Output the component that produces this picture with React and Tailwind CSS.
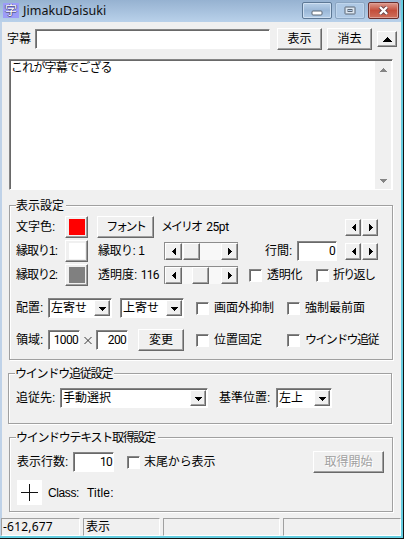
import { clsx } from "clsx";

const raised =
  "border border-t-white border-l-white border-r-[#696969] border-b-[#696969] shadow-[inset_-1px_-1px_0_#a0a0a0] bg-[#f0f0f0]";
const sunken =
  "border border-t-[#858585] border-l-[#858585] border-r-white border-b-white shadow-[inset_1px_1px_0_#696969] bg-white";

function Text({ className, children }) {
  return (
    <span className={clsx("block shrink-0 whitespace-pre", className)}>{children}</span>
  );
}

function Row({ className, children }) {
  return <div className={clsx("flex shrink-0 items-center", className)}>{children}</div>;
}

function Arrow({ dir, className }) {
  const shapes = {
    left: "M5 0h1v7H5zM4 1h1v5H4zM3 2h1v3H3zM2 3h1v1H2z",
    right: "M2 0h1v7H2zM3 1h1v5H3zM4 2h1v3H4zM5 3h1v1H5z",
    up: "M3 2h1v1H3zM2 3h3v1H2zM1 4h5v1H1zM0 5h7v1H0z",
    down: "M0 2h7v1H0zM1 3h5v1H1zM2 4h3v1H2zM3 5h1v1H3z",
  };
  return (
    <svg
      viewBox="0 0 7 7"
      shapeRendering="crispEdges"
      className={clsx("h-[7px] w-[7px] shrink-0 fill-current", className)}
    >
      <path d={shapes[dir]} />
    </svg>
  );
}

function Button({ className, children }) {
  return (
    <button
      className={clsx("flex shrink-0 items-center justify-center whitespace-nowrap", raised, className)}
    >
      {children}
    </button>
  );
}

function Swatch({ color }) {
  return (
    <Button className="ml-px h-[22px] w-[23px]">
      <span className={clsx("h-4 w-4", color)} />
    </Button>
  );
}

function Check({ className }) {
  return <span className={clsx("h-[13px] w-[13px] shrink-0", sunken, className)} />;
}

function Field({ className, children }) {
  return (
    <div className={clsx("flex h-5 shrink-0 items-center justify-end pr-px", sunken, className)}>
      <span className="font-[Roboto] text-[12px] tracking-[-0.7px]">{children}</span>
    </div>
  );
}

function Select({ className, children }) {
  return (
    <div className={clsx("flex h-5 shrink-0 items-center justify-between p-px pl-[2px]", sunken, className)}>
      <span className="whitespace-nowrap">{children}</span>
      <Button className="h-4 w-4">
        <Arrow dir="down" />
      </Button>
    </div>
  );
}

function Spin({ className }) {
  return (
    <div className={clsx("flex shrink-0 gap-px", className)}>
      <Button className="h-[17px] w-4">
        <Arrow dir="left" />
      </Button>
      <Button className="h-[17px] w-4">
        <Arrow dir="right" />
      </Button>
    </div>
  );
}

function Slider({ thumb }) {
  return (
    <div className="flex h-[18px] w-[74px] shrink-0 border-t border-l border-[#8c8c8c] bg-[#f8f8f8]">
      <Button className="h-[17px] w-[17px]">
        <Arrow dir="left" />
      </Button>
      <Button className={clsx("h-[17px] w-[17px]", thumb)} />
      <Button className="ml-auto h-[17px] w-[17px]">
        <Arrow dir="right" />
      </Button>
    </div>
  );
}

function Group({ title, legend, className, children }) {
  return (
    <section
      className={clsx(
        "flex w-96 shrink-0 flex-col border border-[#a0a0a0] pl-[6px] shadow-[1px_1px_0_#fff,inset_1px_1px_0_#fff]",
        className
      )}
    >
      <h2 className={clsx("-mt-[7px] h-[14px] shrink-0 bg-[#f0f0f0] leading-[14px] whitespace-nowrap", legend)}>
        {title}
      </h2>
      {children}
    </section>
  );
}

function TitleBar() {
  return (
    <header className="flex h-[22px] shrink-0 items-start bg-linear-to-b from-[#96b2d1] to-[#b9d1ea] pl-[3px]">
      <span className="mt-[3px] flex h-[15px] w-4 items-center justify-center bg-[#9c9cf8] text-[12px] text-white [text-shadow:1px_0_#5a5a8c,-1px_0_#5a5a8c,0_1px_#5a5a8c]">
        字
      </span>
      <h1 className="ml-1 mt-px w-[279px] font-['Noto_Sans'] text-[12.5px] leading-[19px] tracking-[0.05px] text-[#111]">
        JimakuDaisuki
      </h1>
      <div className="mt-[2px] flex gap-[3px]">
        <button className="flex h-[17px] w-[30px] items-center justify-center rounded-[2px] border border-[#5d7895] bg-linear-to-b from-[#b9d0e8] via-[#9ab7d7] to-[#b4cee9] shadow-[inset_0_0_0_1px_#cfe0f2]">
          <svg viewBox="0 0 12 6" className="mt-1 h-[6px] w-3">
            <rect x="1" y="1" width="10" height="4" rx="1" fill="#fff" stroke="#5b6675" />
          </svg>
        </button>
        <button className="flex h-[17px] w-[30px] items-center justify-center rounded-[2px] border border-[#8ba5c1] bg-[#afc9e5] shadow-[inset_0_0_0_1px_#bfd5ec]">
          <svg viewBox="0 0 12 9" className="h-[9px] w-3">
            <rect x="1" y="1" width="10" height="7" rx="0.5" fill="#dce6f0" stroke="#5b6675" />
            <rect x="4" y="3.5" width="4" height="2" fill="#afc9e5" stroke="#5b6675" />
          </svg>
        </button>
        <button className="flex h-[17px] w-[31px] items-center justify-center rounded-[2px] border border-[#692d2c] bg-linear-to-b from-[#dc9a8f] via-[#c44e3c] to-[#ce6e5c] shadow-[inset_0_0_0_1px_#dfa096]">
          <svg viewBox="0 0 11 9" className="h-[9px] w-[11px]">
            <path d="M2 1l7 7M9 1l-7 7" stroke="#674349" strokeWidth="4" />
            <path d="M2 1l7 7M9 1l-7 7" stroke="#fff" strokeWidth="2.3" />
          </svg>
        </button>
      </div>
    </header>
  );
}

function DisplaySettings() {
  return (
    <Group title="表示設定" legend="w-[50px]" className="ml-[7px] mt-[15px] h-[155px]">
      <Row className="mt-[3px] h-[22px]">
        <Text className="w-12">文字色:</Text>
        <Swatch color="bg-[#ff0000]" />
        <Button className="ml-[9px] h-[22px] w-[57px] tracking-[-2.4px]">フォント</Button>
        <Text className="ml-[7px] w-[184px] tracking-[-2px]">
          メイリオ<span className="font-[Roboto] text-[12px] tracking-[-0.4px]">{"  25pt"}</span>
        </Text>
        <Spin />
      </Row>
      <Row className="mt-[2px] h-[22px]">
        <Text className="w-12 tracking-[-1px]">縁取り1:</Text>
        <Swatch color="bg-white" />
        <Text className="ml-[10px] w-[66px] tracking-[-0.5px]">縁取り: 1</Text>
        <Slider thumb="ml-px" />
        <Text className="ml-[27px] w-8">行間:</Text>
        <Field className="w-10">0</Field>
        <Spin className="ml-2" />
      </Row>
      <Row className="mt-[2px] h-[22px]">
        <Text className="w-12 tracking-[-1px]">縁取り2:</Text>
        <Swatch color="bg-[#808080]" />
        <Text className="ml-[10px] w-[66px]">
          透明度: <span className="font-[Roboto] tracking-[-0.7px]">116</span>
        </Text>
        <Slider thumb="ml-[10px]" />
        <Check className="ml-[11px]" />
        <Text className="ml-[5px] w-[49px] tracking-[-0.3px]">透明化</Text>
        <Check />
        <Text className="ml-1 tracking-[-1.7px]">折り返し</Text>
      </Row>
      <Row className="mt-[11px] h-[22px]">
        <Text className="w-8">配置:</Text>
        <Select className="w-[64px]">左寄せ</Select>
        <Select className="ml-2 w-[64px]">上寄せ</Select>
        <Check className="ml-3" />
        <Text className="ml-[5px] w-[73px]">画面外抑制</Text>
        <Check />
        <Text className="ml-[5px]">強制最前面</Text>
      </Row>
      <Row className="mt-[10px] h-[22px]">
        <Text className="w-8">領域:</Text>
        <Field className="w-8">1000</Field>
        <svg viewBox="0 0 16 9" className="h-[9px] w-4 shrink-0">
          <path d="M4.5 1l7 7M11.5 1l-7 7" stroke="#222" strokeWidth="0.9" />
        </svg>
        <Field className="w-8">200</Field>
        <Button className="ml-[10px] h-[22px] w-[46px]">変更</Button>
        <Check className="ml-3" />
        <Text className="ml-[5px] w-[73px]">位置固定</Text>
        <Check />
        <Text className="ml-[5px] tracking-[-1.6px]">ウインドウ追従</Text>
      </Row>
    </Group>
  );
}

export default function App() {
  return (
    <div className="flex h-[539px] w-[404px] flex-col overflow-hidden border-r border-b border-[#111] bg-[#f0f0f0] font-['Liberation_Sans','Noto_Sans_CJK_JP',sans-serif] text-[12px] leading-[14px] text-black">
      <div className="flex h-[538px] w-[403px] flex-col border-r-2 border-b-2 border-[#65cde0]">
        <TitleBar />
        <main className="flex grow flex-col border-l-2 border-[#bfd2e8]">
          <Row className="mt-[6px] h-[22px] pl-[5px]">
            <Text className="w-7">字幕</Text>
            <div className={clsx("h-5 w-[235px] shrink-0", sunken)} />
            <Button className="ml-[7px] h-[22px] w-[45px]">表示</Button>
            <Button className="ml-[5px] h-[22px] w-[45px]">消去</Button>
            <Button className="ml-[5px] h-4 w-5">
              <svg viewBox="0 0 9 5" shapeRendering="crispEdges" className="h-[5px] w-[9px]">
                <path d="M4 0h1v1H4zM3 1h3v1H3zM2 2h5v1H2zM1 3h7v1H1zM0 4h9v1H0z" />
              </svg>
            </Button>
          </Row>

          <div className={clsx("ml-[7px] mt-[9px] flex h-[131px] w-96 shrink-0 justify-between", sunken)}>
            <p className="pl-px pt-px tracking-[-0.8px]">これが字幕でござる</p>
            <div className="mr-px mt-px flex w-4 flex-col items-center justify-between bg-[#f0f0f0] py-[5px] text-[#858585]">
              <Arrow dir="up" />
              <Arrow dir="down" />
            </div>
          </div>

          <DisplaySettings />

          <Group
            title="ウインドウ追従設定"
            legend="w-[99px] tracking-[-1.2px]"
            className="ml-[6px] mt-[13px] h-[51px]"
          >
            <Row className="mt-[6px] h-[22px]">
              <Text className="ml-px w-11">追従先:</Text>
              <Select className="w-[148px]">手動選択</Select>
              <Text className="ml-[11px] w-[57px]">基準位置:</Text>
              <Select className="w-[56px]">左上</Select>
            </Row>
          </Group>

          <Group
            title="ウインドウテキスト取得設定"
            legend="w-[142px] tracking-[-1.3px]"
            className="ml-[7px] mt-[13px] h-[75px]"
          >
            <Row className="mt-[6px] h-[22px]">
              <Text className="ml-px w-14">表示行数:</Text>
              <Field className="w-[41px]">10</Field>
              <Check className="ml-[13px]" />
              <Text className="ml-1 w-[169px] tracking-[-0.1px]">末尾から表示</Text>
              <Button className="h-[22px] w-[71px] text-[#a0a0a0] [text-shadow:1px_1px_#fff]">取得開始</Button>
            </Row>
            <Row className="mt-[7px] h-[25px]">
              <svg
                viewBox="0 0 25 25"
                shapeRendering="crispEdges"
                className="ml-px h-[25px] w-[25px] shrink-0 bg-white"
              >
                <path d="M12.5 4v17M4 12.5h17" stroke="#111" />
              </svg>
              <Text className="ml-[6px] w-[39px] tracking-[-0.4px]">Class:</Text>
              <Text className="tracking-[0.2px]">Title:</Text>
            </Row>
          </Group>

          <footer className="-ml-px mt-[6px] flex h-[18px] shrink-0 gap-[3px] *:border *:border-t-[#a0a0a0] *:border-l-[#a0a0a0] *:border-r-white *:border-b-white">
            <div className="w-[79px] pl-px font-['Noto_Sans'] text-[12px] leading-[16px] tracking-[0.2px]">-612,677</div>
            <div className="w-[77px] pl-[2px] leading-[16px]">表示</div>
            <div className="w-[117px]" />
            <div className="grow" />
          </footer>
        </main>
      </div>
    </div>
  );
}
